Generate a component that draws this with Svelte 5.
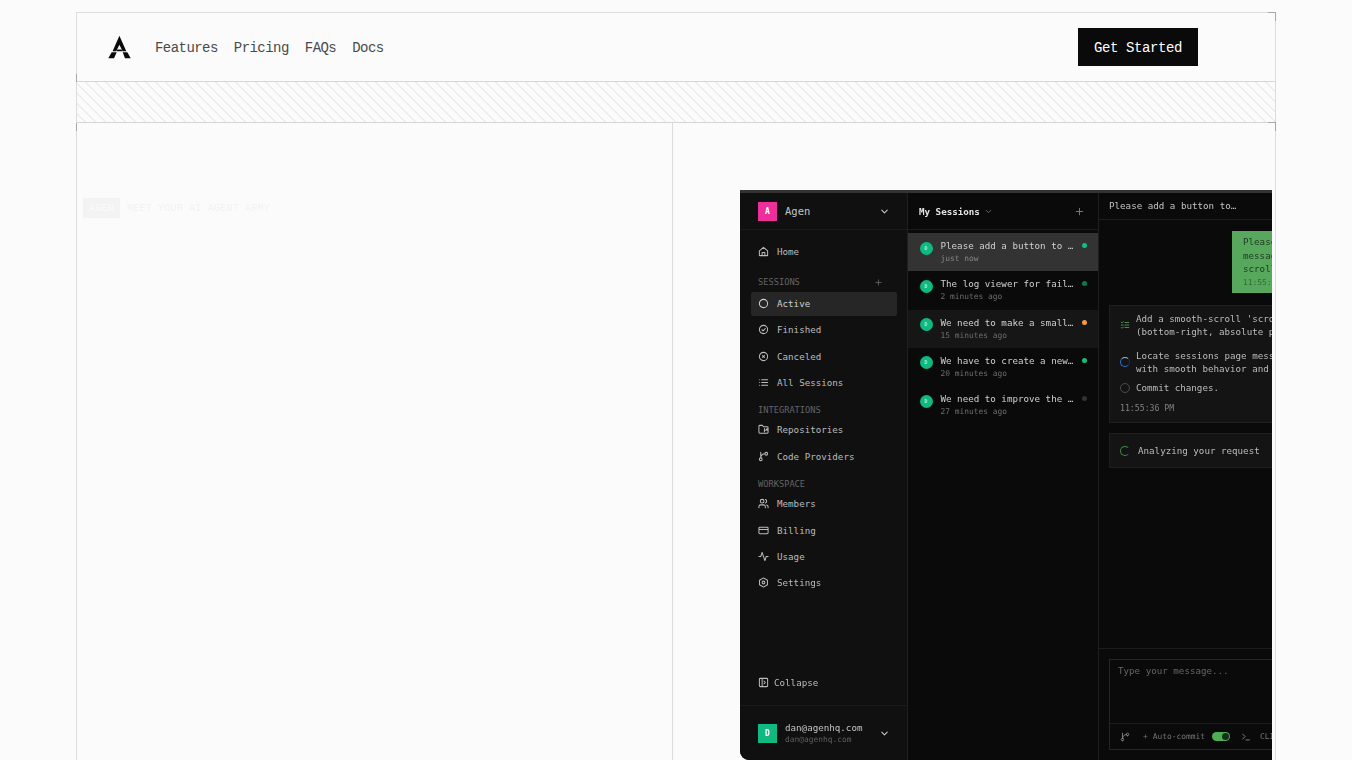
<script>
  const ic = {
    home: "M3 10.5 12 3l9 7.5V20a1 1 0 0 1-1 1H4a1 1 0 0 1-1-1z M9 21v-7h6v7",
    circle: "M12 3a9 9 0 1 0 0 18 9 9 0 0 0 0-18z",
    check: "M12 3a9 9 0 1 0 0 18 9 9 0 0 0 0-18z m-3.5 9.5 2.5 2.5 5-5",
    cancel: "M12 3a9 9 0 1 0 0 18 9 9 0 0 0 0-18z M10 10l4 4 M14 10l-4 4",
    list: "M8 6h13M8 12h13M8 18h13M3 6h.01M3 12h.01M3 18h.01",
    repo: "M4 20h16a2 2 0 0 0 2-2V8a2 2 0 0 0-2-2h-8L9.5 3H4a2 2 0 0 0-2 2v13a2 2 0 0 0 2 2Z M14 10v7 M18 12a1.5 1.5 0 1 0 0-.1z M14 14c2 0 3-1 4-1",
    branch: "M6 3v12 M18 9a3 3 0 1 0 0-6 3 3 0 0 0 0 6z M6 21a3 3 0 1 0 0-6 3 3 0 0 0 0 6z M15 6a9 9 0 0 0-9 9",
    users: "M16 21v-2a4 4 0 0 0-4-4H6a4 4 0 0 0-4 4v2 M9 11a4 4 0 1 0 0-8 4 4 0 0 0 0 8z M22 21v-2a4 4 0 0 0-3-3.87 M16 3.13a4 4 0 0 1 0 7.75",
    card: "M4 5h16a2 2 0 0 1 2 2v10a2 2 0 0 1-2 2H4a2 2 0 0 1-2-2V7a2 2 0 0 1 2-2z M2 10h20",
    activity: "M22 12h-4l-3 9L9 3l-3 9H2",
    gear: "M12 2l8.66 5v10L12 22l-8.66-5V7z M12 9a3 3 0 1 0 0 6 3 3 0 0 0 0-6z",
    panel: "M5 3h14a2 2 0 0 1 2 2v14a2 2 0 0 1-2 2H5a2 2 0 0 1-2-2V5a2 2 0 0 1 2-2z M9 3v18 M13 9l3 3-3 3",
    chev: "m6 9 6 6 6-6",
    plus: "M5 12h14M12 5v14",
    term: "m4 17 6-6-6-6 M12 19h8",
    todo: "M3 5l2 2 3-3 M12 6h9 M3 12h5v0 M12 12h9 M3 18l2 2 3-3 M12 18h9"
  };
  const groups = [
    { rows: [{ i: "home", t: "Home" }] },
    { label: "SESSIONS", plus: true, rows: [
      { i: "circle", t: "Active", on: true }, { i: "check", t: "Finished" },
      { i: "cancel", t: "Canceled" }, { i: "list", t: "All Sessions" } ] },
    { label: "INTEGRATIONS", rows: [{ i: "repo", t: "Repositories" }, { i: "branch", t: "Code Providers" }] },
    { label: "WORKSPACE", rows: [
      { i: "users", t: "Members" }, { i: "card", t: "Billing" },
      { i: "activity", t: "Usage" }, { i: "gear", t: "Settings" } ] }
  ];
  const sessions = [
    { t: "Please add a button to …", w: "just now", c: "#10c07c", cls: "sel" },
    { t: "The log viewer for fail…", w: "2 minutes ago", c: "#0c7a4e" },
    { t: "We need to make a small…", w: "15 minutes ago", c: "#f59a3c", cls: "alt" },
    { t: "We have to create a new…", w: "20 minutes ago", c: "#10c07c" },
    { t: "We need to improve the …", w: "27 minutes ago", c: "#333" }
  ];
</script>

{#snippet icon(name, cls = "i")}
  <svg class={cls} viewBox="0 0 24 24" fill="none" stroke="currentColor" stroke-width="2.2" stroke-linecap="round" stroke-linejoin="round"><path d={ic[name]} /></svg>
{/snippet}

<div class="frame">
  <header class="nav corners">
    <svg class="logo" viewBox="0 0 23 25" fill="#0a0a0a">
      <path d="M11.4 .7 18.3 16.3H14.6L11.4 9.8 8.2 16.3H4.6z" />
      <path d="M9.4 14.4h4.1l.9 1.9H8.5z" />
      <path d="M3.7 17.3h5L6 23.3H.3z" />
      <path d="M14.7 17.3h4.6l3.4 6H17z" />
    </svg>
    <nav class="links">
      <a href="#features">Features</a><a href="#pricing">Pricing</a><a href="#faqs">FAQs</a><a href="#docs">Docs</a>
    </nav>
    <button class="cta">Get Started</button>
  </header>
  <div class="hatch corners"></div>
  <main class="hero">
    <section class="left">
      <div class="eyebrow"><span class="tag">AGEN</span><span>MEET YOUR AI AGENT ARMY</span></div>
    </section>
    <section class="right">
      <div class="app">
        <aside class="side">
          <div class="brand">
            <span class="sq pink">A</span><span class="bname">Agen</span>
            {@render icon("chev", "i chev")}
          </div>
          <div class="groups">
            {#each groups as g}
              <div class="group">
                {#if g.label}
                  <div class="glabel" class:tall={g.plus}>
                    <span>{g.label}</span>
                    {#if g.plus}{@render icon("plus", "i small")}{/if}
                  </div>
                {/if}
                {#each g.rows as r}
                  <div class="row" class:on={r.on}>{@render icon(r.i)}<span>{r.t}</span></div>
                {/each}
              </div>
            {/each}
          </div>
          <div class="collapse">{@render icon("panel")}<span>Collapse</span></div>
          <div class="user">
            <span class="sq green">D</span>
            <div class="who"><div>dan@agenhq.com</div><div class="sub">dan@agenhq.com</div></div>
            {@render icon("chev", "i chev")}
          </div>
        </aside>

        <div class="sess">
          <div class="shead">
            <b>My Sessions</b>{@render icon("chev", "i tiny")}
            <span class="grow"></span>{@render icon("plus", "i plus")}
          </div>
          <div class="items">
            {#each sessions as s}
              <div class="item {s.cls ?? ''}">
                <span class="av">D</span>
                <div class="itxt"><div class="ttl">{s.t}</div><div class="when">{s.w}</div></div>
                <span class="dot" style="background:{s.c}"></span>
              </div>
            {/each}
          </div>
        </div>

        <div class="chat">
          <div class="chead">Please add a button to…</div>
          <div class="msgs">
            <div class="bubble">
              <div>Please add a button to the</div>
              <div>messages page for smooth</div>
              <div>scrolling</div>
              <div class="btime">11:55:36 PM</div>
            </div>
            <div class="card plan">
              <div class="step">
                <span class="sic">{@render icon("todo", "i gr")}</span>
                <div>Add a smooth-scroll 'scroll to bottom' button<br />(bottom-right, absolute position)</div>
              </div>
              <div class="step s2">
                <span class="sic"><span class="spin blue"></span></span>
                <div>Locate sessions page messages container<br />with smooth behavior and visibility</div>
              </div>
              <div class="step s3">
                <span class="sic"><span class="ring"></span></span>
                <div>Commit changes.</div>
              </div>
              <div class="ptime">11:55:36 PM</div>
            </div>
            <div class="card ana">
              <span class="spin green2"></span><span>Analyzing your request</span>
            </div>
          </div>
          <div class="composer">
            <div class="box">
              <div class="ph">Type your message...</div>
              <div class="tools">
                {@render icon("branch", "i bi")}
                <span class="ac"><span class="pm">+</span>Auto-commit</span>
                <span class="tog"><span></span></span>
                {@render icon("term", "i bi")}
                <span class="ac">CLI</span>
              </div>
            </div>
          </div>
        </div>
      </div>
    </section>
  </main>
</div>

<style>
  :global(html), :global(body) { margin: 0; height: 760px; overflow: hidden; background: #fbfbfb; }
  .frame {
    box-sizing: border-box; width: 1200px; height: 748px; margin: 12px 0 0 76px;
    border: 1px solid #dcdcdc; border-bottom: 0;
    font-family: "Liberation Mono", monospace; display: flex; flex-direction: column;
  }
  .corners { position: relative; }
  .corners::before, .corners::after {
    content: ""; position: absolute; width: 8px; height: 8px; pointer-events: none;
  }
  .nav::before { left: -1px; bottom: -1px; border-left: 1px solid #a8a8a8; }
  .nav::after { right: -1px; top: -1px; border-top: 1px solid #a8a8a8; border-right: 1px solid #a8a8a8; width: 7px; }
  .hatch::before { left: -1px; bottom: -9px; border-left: 1px solid #a8a8a8; }
  .hatch::after { right: -1px; bottom: -9px; border-top: 1px solid #a8a8a8; border-right: 1px solid #a8a8a8; width: 7px; }

  .nav {
    height: 68px; flex: none; display: flex; align-items: center;
    padding: 0 77px 0 31px; border-bottom: 1px solid #d6d6d6;
  }
  .logo { width: 23px; height: 25px; display: block; margin-top: 1px; }
  .links { display: flex; gap: 16px; margin-left: 24px; padding-top: 2px; font-size: 14px; letter-spacing: -.55px; }
  .links a { color: #4a4a4a; text-decoration: none; }
  .cta {
    margin-left: auto; width: 120px; height: 38px; border: 0; background: #0a0a0a; color: #fff;
    font: 14px "Liberation Mono", monospace; letter-spacing: -.4px; padding: 2px 0 0;
  }
  .hatch {
    height: 40px; flex: none; border-bottom: 1px solid #d6d6d6;
    background: repeating-linear-gradient(45deg, transparent 0 5.3px, #ededed 5.3px 7.071px);
  }
  .hero { flex: 1; display: flex; min-height: 0; }
  .left { width: 589px; flex: none; border-right: 1px solid #dcdcdc; padding: 75px 0 0 6px; }
  .eyebrow { display: flex; align-items: center; gap: 7px; color: #f2f2f2; font-size: 10.35px; filter: blur(.4px); }
  .tag { width: 37px; height: 20px; display: flex; align-items: center; justify-content: center; background: #f3f3f3; color: #fafafa; }
  .right { flex: 1; padding: 67px 0 0 67px; min-width: 0; }

  .app {
    width: 532px; height: 570px; display: flex; box-sizing: border-box; overflow: hidden;
    background: #0a0a0a; border-top: 3px solid #333; border-bottom-left-radius: 9px;
    font-family: "DejaVu Sans Mono", monospace; font-size: 9.2px; line-height: 13px; color: #d0d0d0;
    filter: blur(.4px);
  }
  .i { width: 11px; height: 11px; flex: none; display: block; }
  .side {
    width: 168px; flex: none; box-sizing: border-box; background: #101010; border-right: 1px solid #1f1f1f;
    display: flex; flex-direction: column;
  }
  .brand {
    height: 37px; flex: none; border-bottom: 1px solid #1a1a1a; display: flex; align-items: center; padding: 0 18px; box-sizing: border-box;
  }
  .sq { width: 19px; height: 19px; display: flex; align-items: center; justify-content: center; color: #fff; font-size: 8px; font-weight: 700; flex: none; }
  .pink { background: #ec2f9b; }
  .green { background: #10b981; }
  .bname { margin-left: 8px; font-size: 10.5px; color: #c4c4c4; }
  .chev { margin-left: auto; margin-right: -1px; width: 11px; height: 11px; color: #ccc; }
  .groups { padding: 9.5px 10.5px 0 10.5px; }
  .group + .group { margin-top: 9.6px; }
  .group:nth-child(2) { margin-top: 10px; }
  .glabel {
    height: 12px; margin-bottom: 2px; padding: 2px 7.5px 0; box-sizing: border-box; display: flex; align-items: center; justify-content: space-between;
    font-size: 8.7px; color: #646464;
  }
  .glabel.tall { height: 16px; margin-bottom: 2px; }
  .small { width: 9px; height: 9px; color: #666; margin-right: 6px; }
  .row { height: 24px; display: flex; align-items: center; gap: 8px; padding-left: 7.5px; border-radius: 2px; color: #bcbcbc; }
  .row + .row { margin-top: 2.3px; }
  .row.on { background: #262626; color: #cfcfcf; }
  .collapse { margin-top: auto; height: 24px; display: flex; align-items: center; gap: 5px; padding-left: 18px; color: #bcbcbc; }
  .user {
    margin-top: 11px; height: 55px; flex: none; box-sizing: border-box; border-top: 1px solid #1a1a1a;
    display: flex; align-items: center; padding: 0 18px; gap: 8px; color: #c4c4c4;
  }
  .who { line-height: 12.5px; margin-top: 2px; }
  .sub { font-size: 7.9px; color: #5e5e5e; }

  .sess { width: 191px; flex: none; box-sizing: border-box; border-right: 1px solid #1f1f1f; }
  .shead {
    height: 37px; box-sizing: border-box; border-bottom: 1px solid #1c1c1c; display: flex; align-items: center; padding: 0 13px 0 11px; color: #e4e4e4;
  }
  .shead b { font-weight: 700; }
  .tiny { width: 9px; height: 9px; margin-left: 4px; color: #777; }
  .grow { flex: 1; }
  .plus { width: 11px; height: 11px; color: #777; }
  .items { padding-top: 3px; }
  .item { height: 38.25px; box-sizing: border-box; display: flex; padding: 6px 11px 0 11.5px; }
  .item.sel { background: #333; }
  .item.alt { background: #161616; }
  .av {
    width: 13px; height: 13px; margin-top: 2.5px; border-radius: 50%; background: #10b981; color: #dff; font-size: 5px; line-height: 13px;
    text-align: center; flex: none;
  }
  .itxt { margin-left: 8px; flex: 1; white-space: nowrap; min-width: 0; }
  .ttl { color: #d0d0d0; }
  .when { font-size: 7.9px; color: #6e6e6e; }
  .sel .when { color: #888; }
  .dot { width: 5px; height: 5px; border-radius: 50%; margin-top: 4px; flex: none; }

  .chat { flex: 1; min-width: 0; display: flex; flex-direction: column; background: #0a0a0a; }
  .chead {
    height: 27px; flex: none; box-sizing: border-box; border-bottom: 1px solid #1c1c1c; padding: 6px 0 0 10px; color: #c4c4c4;
  }
  .msgs { flex: 1; min-height: 0; padding: 11px 0 0 10px; }
  .bubble {
    margin-left: 123px; width: 170px; box-sizing: border-box; padding: 4px 0 4px 11px; background: #57a85c; color: #1d3a20;
    line-height: 13.5px; white-space: nowrap;
  }
  .btime { font-size: 7.9px; color: #2f6a34; }
  .card { width: 260px; box-sizing: border-box; background: #141414; border: 1px solid #1f1f1f; white-space: nowrap; }
  .plan { margin-top: 12px; padding: 6px 0 8px 10px; height: 118px; }
  .step { display: flex; gap: 6px; align-items: center; color: #bcbcbc; }
  .sic { width: 10px; height: 10px; display: block; flex: none; }
  .sic .i { width: 10px; height: 10px; }
  .gr { color: #4f9a55; }
  .s2 { margin-top: 11px; }
  .s3 { margin-top: 6px; }
  .ptime { margin-top: 8px; font-size: 8.2px; color: #808080; }
  .spin, .ring { display: block; box-sizing: border-box; width: 10px; height: 10px; border-radius: 50%; }
  .ring { border: 1px solid #4a4a4a; }
  .blue { border: 1.4px solid #2f6fd6; border-right-color: #17305c; border-top-color: #9fbce8; }
  .green2 { border: 1.2px solid #3f8a48; border-right-color: transparent; }
  .ana { margin-top: 10px; height: 35px; padding-left: 10px; display: flex; align-items: center; gap: 8px; color: #bcbcbc; }
  .composer { flex: none; border-top: 1px solid #1c1c1c; padding: 10px 0 0 10px; height: 112px; box-sizing: border-box; }
  .box { width: 260px; height: 91px; box-sizing: border-box; border: 1px solid #262626; display: flex; flex-direction: column; }
  .ph { padding: 4px 0 0 8px; color: #666; flex: 1; }
  .tools {
    height: 26px; flex: none; box-sizing: border-box; border-top: 1px solid #1c1c1c; display: flex; align-items: center; padding-left: 10px; color: #777; white-space: nowrap;
  }
  .bi { width: 10px; height: 10px; color: #888; }
  .ac { font-size: 7.9px; color: #777; }
  .pm { margin: 0 5px 0 13px; }
  .tools > .ac:nth-of-type(1) { margin-right: 7px; }
  .tog { width: 18px; height: 9px; border-radius: 5px; background: #4fae55; display: flex; align-items: center; justify-content: flex-end; padding-right: 1px; box-sizing: border-box; margin-right: 11px; }
  .tog span { width: 7px; height: 7px; border-radius: 50%; background: #14301a; }
  .tools > .ac:last-child { margin-left: 9px; }
</style>
